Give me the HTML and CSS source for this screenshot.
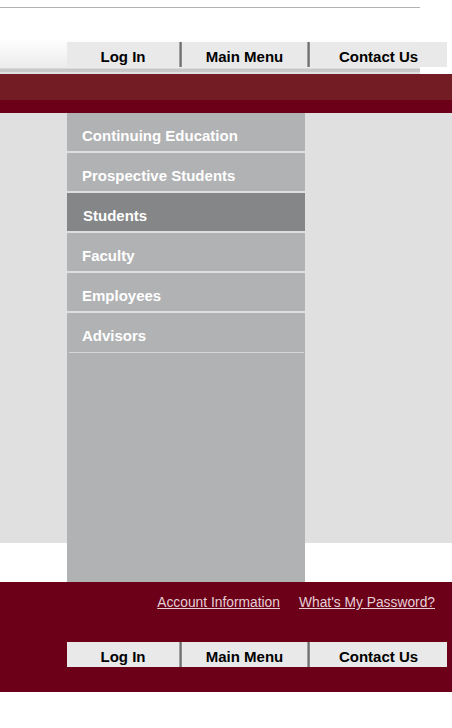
FILE: index.html
```html
<!DOCTYPE html>
<html lang="en">
<head>
<meta charset="utf-8">
<title>Portal</title>
<link rel="stylesheet" href="styles.css">
</head>
<body>
<div class="page">
  <header class="masthead">
    <div class="rule"></div>
    <nav class="nav nav-top">
      <a class="nav-item w1" href="#">Log In</a><span class="sep"></span><a class="nav-item w2" href="#">Main Menu</a><span class="sep"></span><a class="nav-item w3" href="#">Contact Us</a>
    </nav>
  </header>
  <div class="band"></div>
  <div class="band-dark"></div>
  <main class="content">
    <ul class="menu">
      <li class="menu-item">Continuing Education</li>
      <li class="menu-item">Prospective Students</li>
      <li class="menu-item active">Students</li>
      <li class="menu-item">Faculty</li>
      <li class="menu-item">Employees</li>
      <li class="menu-item last">Advisors</li>
    </ul>
  </main>
  <footer class="footer">
    <div class="links">
      <a class="link" href="#">Account Information</a>
      <a class="link" href="#">What's My Password?</a>
    </div>
    <nav class="nav nav-bottom">
      <a class="nav-item w1" href="#">Log In</a><span class="sep"></span><a class="nav-item w2" href="#">Main Menu</a><span class="sep"></span><a class="nav-item w3" href="#">Contact Us</a>
    </nav>
  </footer>
</div>
</body>
</html>
```

FILE: styles.css
```css
html, body {
  margin: 0;
  padding: 0;
  background: #ffffff;
  font-family: "Liberation Sans", Arial, sans-serif;
}

.masthead {
  height: 74px;
  box-sizing: border-box;
  padding-top: 7px;
  background-image: linear-gradient(#ffffff 0, #ffffff 38px, #ececec 68px, #c6c6c6 69px, #cacaca 71.5px, #dedede 72px, #e2e2e2 74px);
  background-size: 420px 74px;
  background-repeat: no-repeat;
}

.rule {
  width: 420px;
  height: 1px;
  background: #b2b2b2;
}

.nav {
  display: flex;
  width: 380px;
  height: 25px;
  margin-left: 67px;
  background: #e9e9e9;
}

.nav-top {
  margin-top: 34px;
}

.nav-bottom {
  margin-top: 31px;
}

.nav-item {
  box-sizing: border-box;
  padding-top: 6px;
  text-align: center;
  font-weight: bold;
  font-size: 15px;
  line-height: 17px;
  color: #000000;
  text-decoration: none;
}

.w1 { width: 112px; }
.w2 { width: 125px; }
.w3 { width: 137px; }

.sep {
  width: 3px;
  background: linear-gradient(to right, #b8b8b8, #6f6f6f 50%, #9c9c9c);
}

.band {
  height: 26px;
  background: #731c23;
}

.band-dark {
  height: 13px;
  background: #6c0019;
}

.content {
  height: 469px;
  background: linear-gradient(#e0e0e0 0, #e0e0e0 430px, #ffffff 430px);
}

.menu {
  list-style: none;
  margin: 0 0 0 67px;
  padding: 0;
  width: 238px;
  height: 100%;
  background: #b1b2b4;
}

.menu-item {
  box-sizing: border-box;
  height: 40px;
  padding: 14px 0 0 15px;
  border-bottom: 2px solid #dedede;
  font-weight: bold;
  font-size: 15px;
  line-height: 17px;
  color: #ffffff;
}

.menu-item.active {
  background: #858688;
  padding-left: 16px;
}

.menu-item.last {
  border-bottom: 0;
  background-image: linear-gradient(#d6d6d6, #d6d6d6);
  background-size: 235px 1px;
  background-position: 2px 39px;
  background-repeat: no-repeat;
}

.footer {
  height: 110px;
  box-sizing: border-box;
  padding-top: 13px;
  background: #6c0019;
}

.links {
  display: flex;
  justify-content: flex-end;
  gap: 19px;
  padding-right: 17px;
  height: 16px;
}

.link {
  font-size: 13.8px;
  line-height: 16px;
  color: #e6cfd5;
  text-decoration: underline;
}
```
